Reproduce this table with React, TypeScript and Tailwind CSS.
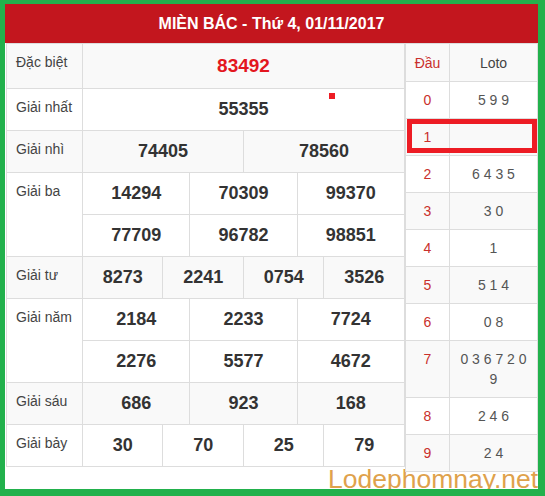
import React from "react";

type Prize = { label: string; lines: string[][]; special?: boolean };

const PRIZES: Prize[] = [
  { label: "Đặc biệt", lines: [["83492"]], special: true },
  { label: "Giải nhất", lines: [["55355"]] },
  { label: "Giải nhì", lines: [["74405", "78560"]] },
  { label: "Giải ba", lines: [["14294", "70309", "99370"], ["77709", "96782", "98851"]] },
  { label: "Giải tư", lines: [["8273", "2241", "0754", "3526"]] },
  { label: "Giải năm", lines: [["2184", "2233", "7724"], ["2276", "5577", "4672"]] },
  { label: "Giải sáu", lines: [["686", "923", "168"]] },
  { label: "Giải bảy", lines: [["30", "70", "25", "79"]] },
];

const LOTO = ["5 9 9", "", "6 4 3 5", "3 0", "1", "5 1 4", "0 8", "0 3 6 7 2 0 9", "2 4 6", "2 4"];

const SPAN: Record<number, number> = { 1: 12, 2: 6, 3: 4, 4: 3 };

export default function App() {
  return (
    <div className="relative w-[545px] h-[496px] bg-white font-['Liberation_Sans',Arial,sans-serif]">
      {/* watermark sits under the green frame */}
      <div className="absolute left-[328px] top-[466px] text-[26.5px] leading-none text-[#dfa24c] whitespace-nowrap">
        Lodephomnay.net
      </div>

      <div className="relative w-full h-full border-[#22b14c] border-l-[5px] border-t-[4px] border-r-[7px] border-b-[7px]">
        {/* title bar */}
        <div className="h-[39px] bg-[#c3161e] flex items-center justify-center text-white font-bold text-[16px]">
          MIÈN BÁC - Thứ 4, 01/11/2017
        </div>

        <div className="flex items-start pl-[1px]">
          {/* results */}
          <table className="table-fixed border-collapse w-[399px] text-[#333]">
            <colgroup>
              <col className="w-[76px]" />
              {Array.from({ length: 12 }).map((_, i) => (
                <col key={i} />
              ))}
            </colgroup>
            <tbody>
              {PRIZES.map((p, pi) => {
                const bg = pi % 2 === 0 ? "bg-[#f9f9f9]" : "bg-white";
                return p.lines.map((line, li) => (
                  <tr key={`${pi}-${li}`} className={`${bg} ${p.special ? "h-[45px]" : "h-[42px]"}`}>
                    {li === 0 && (
                      <td
                        rowSpan={p.lines.length}
                        className="border border-[#ddd] align-top pl-[9px] pt-[8px] text-[14px] leading-5 text-[#444]"
                      >
                        {p.label}
                      </td>
                    )}
                    {line.map((n, ni) => (
                      <td
                        key={ni}
                        colSpan={SPAN[line.length]}
                        className={`border border-[#ddd] text-center align-middle font-bold ${
                          p.special ? "text-[19px] text-[#e3161e]" : "text-[18px]"
                        }`}
                      >
                        {n}
                      </td>
                    ))}
                  </tr>
                ));
              })}
            </tbody>
          </table>

          {/* loto by head digit */}
          <table className="table-fixed border-collapse w-[133px] text-[14px] leading-5">
            <colgroup>
              <col className="w-[44px]" />
              <col />
            </colgroup>
            <tbody>
              <tr className="h-[38px] bg-[#f9f9f9]">
                <td className="border border-[#ddd] text-center text-[#c9302c]">Đầu</td>
                <td className="border border-[#ddd] text-center text-[#444]">Loto</td>
              </tr>
              {LOTO.map((l, i) => (
                <tr key={i} className={i % 2 === 1 ? "bg-[#f9f9f9]" : "bg-white"}>
                  <td className="border border-[#ddd] text-center align-top py-2 text-[#c9302c]">{i}</td>
                  <td className="border border-[#ddd] text-center align-top py-2 px-2 text-[#555]">{l}</td>
                </tr>
              ))}
            </tbody>
          </table>
        </div>
      </div>

      {/* paint marks */}
      <div className="absolute left-[329px] top-[93px] w-[6px] h-[6px] bg-[#ed1c24]" />
      <div className="absolute left-[407px] top-[119px] w-[130px] h-[34px] border-[5px] border-[#ed1c24]" />
    </div>
  );
}
